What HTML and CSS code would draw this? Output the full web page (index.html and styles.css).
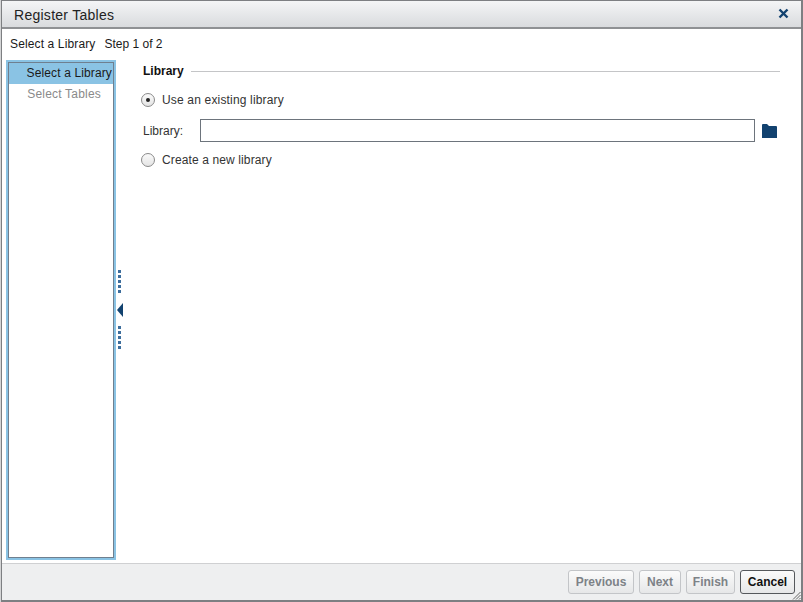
FILE: index.html
```html
<!DOCTYPE html>
<html lang="en">
<head>
<meta charset="utf-8">
<title>Register Tables</title>
<link rel="stylesheet" href="styles.css">
</head>
<body>
<div class="dialog">
  <header class="titlebar">
    <span class="title">Register Tables</span>
    <svg class="close" width="11" height="11" viewBox="0 0 11 11"><path d="M1.5 1.5 L9.5 9.5 M9.5 1.5 L1.5 9.5" stroke="#12426f" stroke-width="2.4" fill="none"/></svg>
  </header>
  <div class="stepline"><span class="step-name">Select a Library</span><span>Step 1 of 2</span></div>
  <div class="main">
    <nav class="steps">
      <div class="steps-inner">
        <div class="step selected">Select a Library</div>
        <div class="step disabled">Select Tables</div>
      </div>
    </nav>
    <div class="splitter">
      <span class="dots"></span>
      <svg class="collapse" width="6" height="14" viewBox="0 0 6 14"><path d="M6 0 V14 L0 7 Z" fill="#12426f"/></svg>
      <span class="dots"></span>
    </div>
    <section class="content">
      <div class="group-head"><span class="group-title">Library</span><span class="rule"></span></div>
      <label class="radio-row first"><span class="radio checked"></span>Use an existing library</label>
      <div class="field-row">
        <span class="field-label">Library:</span>
        <span class="input"></span>
        <svg class="folder" width="15" height="14" viewBox="0 0 15 14"><path d="M0 1 Q0 0 1 0 H5 L7 2 H14 Q15 2 15 3 V14 H0 Z" fill="#12426f"/></svg>
      </div>
      <label class="radio-row second"><span class="radio"></span>Create a new library</label>
    </section>
  </div>
  <footer class="footer">
    <button class="btn off prev">Previous</button>
    <button class="btn off next">Next</button>
    <button class="btn off finish">Finish</button>
    <button class="btn cancel">Cancel</button>
    <svg class="grip" width="10" height="10" viewBox="0 0 10 10"><path d="M9.5 2 L2 9.5 M9.5 5 L5 9.5 M9.5 8 L8 9.5" stroke="#666" stroke-width="1" fill="none"/></svg>
  </footer>
</div>
</body>
</html>
```
FILE: styles.css
```css
* { box-sizing: border-box; }
html, body { margin: 0; padding: 0; }
body { width: 803px; height: 602px; overflow: hidden; background: #d4d5d6; font-family: "Liberation Sans", Arial, sans-serif; font-size: 12px; color: #1a1a1a; }
.dialog { width: 802px; height: 602px; margin-left: 1px; display: flex; flex-direction: column; position: relative; border: 1px solid #7d7f82; border-right-width: 2px; border-bottom-width: 2px; background: #fff; }
.titlebar { height: 28px; flex: none; display: flex; align-items: center; justify-content: space-between; padding: 0 12px 1px 12px; background: linear-gradient(#f4f5f6, #d9dbde); border-bottom: 2px solid #8f9194; }
.title { font-size: 14px; color: #222; letter-spacing: .27px; margin-top: 2px; }
.close { display: block; }
.stepline { height: 31px; flex: none; display: flex; gap: 9px; padding: 8px 0 0 8px; line-height: 14px; }
.step-name { letter-spacing: .13px; }
.main { flex: 1; min-height: 0; display: flex; }
.steps { width: 110px; margin-left: 4px; margin-bottom: 3px; flex: none; border: 2px solid #8ac3e4; }
.steps-inner { height: 100%; border: 1px solid #6f7f8f; }
.step { height: 21px; line-height: 21px; text-align: right; }
.step.selected { background: #8ac3e4; padding-right: 1px; letter-spacing: .13px; }
.step.disabled { color: #8a8a8a; padding-right: 12px; letter-spacing: .2px; }
.splitter { width: 7px; flex: none; display: flex; flex-direction: column; align-items: center; justify-content: center; padding-bottom: 4px; }
.dots { display: block; width: 3px; height: 23px; background: repeating-linear-gradient(#3d6d9c 0 3px, transparent 3px 5px); }
.collapse { display: block; margin: 10px 0 9px 1px; }
.content { flex: 1; min-width: 0; padding: 1px 21px 0 20px; }
.group-head { display: flex; align-items: center; gap: 7px; height: 20px; }
.group-title { font-weight: bold; color: #111; }
.rule { flex: 1; height: 1px; background: #c4c5c7; }
.radio-row { display: flex; align-items: center; gap: 7px; height: 16px; margin-left: -2px; color: #333; }
.radio-row.first { margin-top: 11px; letter-spacing: .17px; }
.radio-row.second { letter-spacing: .12px; }
.radio { width: 14px; height: 14px; flex: none; border: 1px solid #8a8a8a; border-radius: 50%; background: linear-gradient(#fafafa, #e4e4e4); display: flex; align-items: center; justify-content: center; }
.radio.checked::after { content: ""; width: 4px; height: 4px; border-radius: 50%; background: #222; }
.field-row { display: flex; align-items: center; height: 23px; margin: 11px 0 10px; }
.field-label { width: 57px; flex: none; color: #333; }
.input { width: 555px; height: 23px; flex: none; border: 1px solid #6d747c; background: #fff; }
.folder { margin: 1px 0 0 7px; flex: none; }
.footer { height: 37px; flex: none; position: relative; display: flex; justify-content: flex-end; gap: 5px; padding: 6px 6px 0 0; background: #eeeff0; border-top: 1px solid #cfd0d2; }
.btn { height: 24px; padding: 0; font: bold 12px "Liberation Sans", Arial, sans-serif; border-radius: 3px; background: linear-gradient(#fbfbfb, #e6e7e8); }
.btn.off { border: 1px solid #c3c5c8; color: #7d8287; }
.prev { width: 66px; }
.next { width: 42px; }
.finish { width: 49px; }
.cancel { width: 55px; border: 1px solid #55585c; color: #111; }
.grip { position: absolute; right: 0; bottom: 0; }
```
